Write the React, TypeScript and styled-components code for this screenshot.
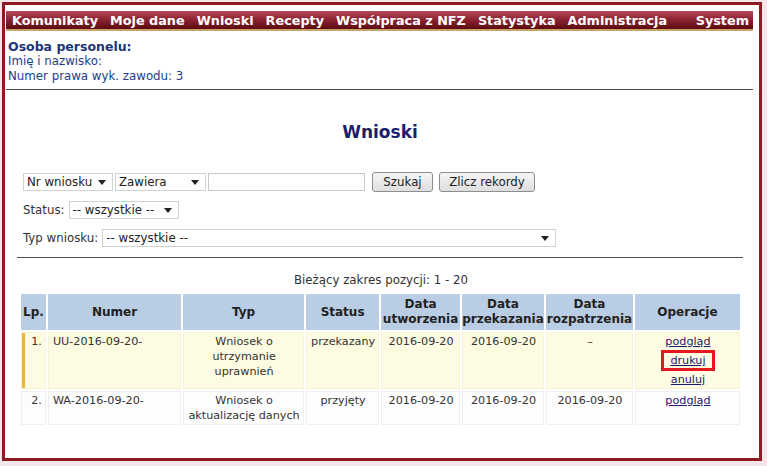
import React from "react";
import styled, { createGlobalStyle } from "styled-components";

const Global = createGlobalStyle`
  html, body { margin: 0; padding: 0; }
  body {
    background: #f4e6e8;
    font-family: "DejaVu Sans", Verdana, sans-serif;
    font-size: 11.8px;
    color: #333;
  }
`;

const Frame = styled.div`
  box-sizing: border-box;
  margin: 2px 5px 0 2px;
  width: 760px;
  height: 459px;
  border: 3px solid #8c1b22;
  background: #fff;
  padding: 6px 6px 0 1px;
  display: flex;
  flex-direction: column;
`;

const MenuBar = styled.nav`
  display: flex;
  align-items: center;
  height: 18px;
  padding: 0 4px 0 6px;
  background: linear-gradient(#b14a5a 0%, #8e2434 45%, #5c0b10 100%);
  border-bottom: 2px solid #c9a46a;
  gap: 12px;
`;

const MenuItem = styled.span<{ $push?: boolean }>`
  font-family: "DejaVu Sans", Verdana, sans-serif;
  font-weight: bold;
  font-size: 12.8px;
  color: #fff;
  white-space: nowrap;
  margin-left: ${(p) => (p.$push ? "auto" : "0")};
`;

const Person = styled.div`
  padding: 8px 2px 5px 2px;
  color: #1e3c8c;
  line-height: 15px;
  border-bottom: 1px solid #4a4a4a;
`;

const PersonTitle = styled.div`
  font-weight: bold;
  font-size: 12.5px;
  color: #1c3478;
`;

const Content = styled.div`
  padding: 0 10px 0 11px;
  display: flex;
  flex-direction: column;
`;

const Title = styled.h1`
  margin: 31px 0 0 0;
  text-align: center;
  font-size: 17px;
  line-height: 22px;
  font-weight: bold;
  color: #1a1f6e;
`;

const Filters = styled.div`
  margin-top: 30px;
  padding-left: 6px;
  display: flex;
  flex-direction: column;
  gap: 10px;
`;

const FilterRow = styled.div`
  display: flex;
  align-items: center;
  height: 18px;
`;

const Label = styled.span`
  color: #333;
  margin-right: 4px;
`;

const SelectBox = styled.div<{ $w: number }>`
  box-sizing: border-box;
  width: ${(p) => p.$w}px;
  height: 18px;
  display: flex;
  align-items: center;
  justify-content: space-between;
  padding: 0 6px 0 3px;
  border: 1px solid #d2d2d2;
  background: #fff;
  color: #222;
  margin-right: 2px;
`;

const TextInput = styled.div`
  box-sizing: border-box;
  width: 157px;
  height: 18px;
  border: 1px solid #c8c8c8;
  background: #fff;
  margin-right: 7px;
`;

const Button = styled.div<{ $w: number }>`
  box-sizing: border-box;
  width: ${(p) => p.$w}px;
  height: 20px;
  display: flex;
  align-items: center;
  justify-content: center;
  border: 1px solid #8e8e8e;
  border-radius: 3px;
  background: linear-gradient(#f6f6f6, #dedede);
  color: #222;
  margin-right: 6px;
`;

const Arrow = () => (
  <svg width="8" height="5" viewBox="0 0 8 5">
    <path d="M0 0 H8 L4 5 Z" fill="#222" />
  </svg>
);

const Rule = styled.div`
  margin: 10px 0 0 0;
  border-top: 1px solid #555;
`;

const Range = styled.div`
  text-align: center;
  margin-top: 15px;
  padding-left: 2px;
  line-height: 15px;
`;

const Table = styled.table`
  margin: 4px 0 0 2px;
  border-collapse: separate;
  border-spacing: 2px;
  width: 723px;
`;

const Th = styled.th<{ $w: number }>`
  width: ${(p) => p.$w}px;
  background: #b9cde5;
  font-size: 12px;
  font-weight: bold;
  color: #222;
  line-height: 15px;
  height: 36px;
  padding: 0;
  text-align: center;
`;

const Tr = styled.tr<{ $active?: boolean }>`
  background: ${(p) => (p.$active ? "#fdfbe2" : "#fdfdfd")};
`;

const Td = styled.td<{ $align?: string; $bar?: boolean; $active?: boolean }>`
  vertical-align: top;
  text-align: ${(p) => p.$align || "center"};
  padding: 1px 3px 1px 4px;
  line-height: 15px;
  font-size: 11.2px;
  color: #333;
  white-space: nowrap;
  border: 1px solid ${(p) => (p.$active ? "#f7f3da" : "#efefef")};
  box-shadow: ${(p) => (p.$bar ? "inset 3px 0 0 #f0b23a" : "none")};
`;

const Ops = styled.div`
  display: flex;
  flex-direction: column;
  align-items: center;
  gap: 1px;
`;

const Link = styled.a`
  color: #1b1b6b;
  text-decoration: underline;
  line-height: 15px;
`;

const Marked = styled.span`
  display: inline-flex;
  justify-content: center;
  border: 3px solid #e3191f;
  width: 48px;
  line-height: 12px;
`;

const cols = [
  { t: "Lp.", w: 25 },
  { t: "Numer", w: 134 },
  { t: "Typ", w: 121 },
  { t: "Status", w: 71 },
  { t: "Data\nutworzenia", w: 79 },
  { t: "Data\nprzekazania", w: 82 },
  { t: "Data\nrozpatrzenia", w: 87 },
  { t: "Operacje", w: 106 },
];

export default function App() {
  return (
    <>
      <Global />
      <Frame>
        <MenuBar>
          <MenuItem>Komunikaty</MenuItem>
          <MenuItem>Moje dane</MenuItem>
          <MenuItem>Wnioski</MenuItem>
          <MenuItem>Recepty</MenuItem>
          <MenuItem>Współpraca z NFZ</MenuItem>
          <MenuItem>Statystyka</MenuItem>
          <MenuItem>Administracja</MenuItem>
          <MenuItem $push>System</MenuItem>
        </MenuBar>
        <Person>
          <PersonTitle>Osoba personelu:</PersonTitle>
          <div>Imię i nazwisko:</div>
          <div>Numer prawa wyk. zawodu: 3</div>
        </Person>
        <Content>
          <Title>Wnioski</Title>
          <Filters>
            <FilterRow>
              <SelectBox $w={90}>
                <span>Nr wniosku</span>
                <Arrow />
              </SelectBox>
              <SelectBox $w={91}>
                <span>Zawiera</span>
                <Arrow />
              </SelectBox>
              <TextInput />
              <Button $w={61}>Szukaj</Button>
              <Button $w={96}>Zlicz rekordy</Button>
            </FilterRow>
            <FilterRow>
              <Label>Status:</Label>
              <SelectBox $w={110}>
                <span>-- wszystkie --</span>
                <Arrow />
              </SelectBox>
            </FilterRow>
            <FilterRow>
              <Label>Typ wniosku:</Label>
              <SelectBox $w={454}>
                <span>-- wszystkie --</span>
                <Arrow />
              </SelectBox>
            </FilterRow>
          </Filters>
          <Rule />
          <Range>Bieżący zakres pozycji: 1 - 20</Range>
          <Table>
            <thead>
              <tr>
                {cols.map((c) => (
                  <Th key={c.t} $w={c.w}>
                    {c.t.split("\n").map((l, i) => (
                      <div key={i}>{l}</div>
                    ))}
                  </Th>
                ))}
              </tr>
            </thead>
            <tbody>
              <Tr $active>
                <Td $align="right" $bar $active>1.</Td>
                <Td $align="left" $active>UU-2016-09-20-</Td>
                <Td $active>Wniosek o<br />utrzymanie<br />uprawnień</Td>
                <Td $active>przekazany</Td>
                <Td $active>2016-09-20</Td>
                <Td $active>2016-09-20</Td>
                <Td $active>–</Td>
                <Td $active>
                  <Ops>
                    <Link>podgląd</Link>
                    <Marked>
                      <Link>drukuj</Link>
                    </Marked>
                    <Link>anuluj</Link>
                  </Ops>
                </Td>
              </Tr>
              <Tr>
                <Td $align="right">2.</Td>
                <Td $align="left">WA-2016-09-20-</Td>
                <Td>Wniosek o<br />aktualizację danych</Td>
                <Td>przyjęty</Td>
                <Td>2016-09-20</Td>
                <Td>2016-09-20</Td>
                <Td>2016-09-20</Td>
                <Td>
                  <Ops>
                    <Link>podgląd</Link>
                  </Ops>
                </Td>
              </Tr>
            </tbody>
          </Table>
        </Content>
      </Frame>
    </>
  );
}
